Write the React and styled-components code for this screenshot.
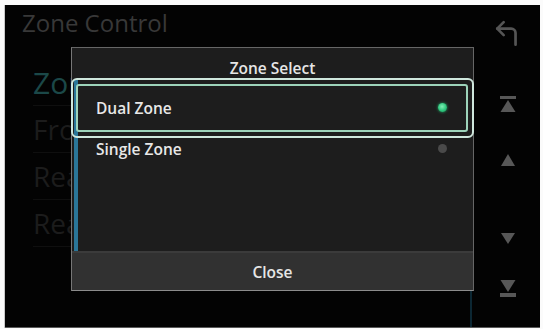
import React from "react";
import styled, { createGlobalStyle } from "styled-components";

const GlobalStyle = createGlobalStyle`
  html, body { margin: 0; padding: 0; background: #fbfbfb; }
  body { font-family: "Open Sans", "Noto Sans", sans-serif; }
  * { box-sizing: border-box; }
`;

const Screen = styled.div`
  position: relative;
  margin: 5px 3px 1px 5px;
  width: 535px;
  height: 323px;
  background: #030303;
  box-shadow: -1px 0 0 #c9c9c9;
  border-bottom: 1px solid #5a5a5a;
  display: grid;
  grid-template-columns: 1fr 62px;
  overflow: hidden;
`;

const Main = styled.div`
  display: flex;
  flex-direction: column;
  padding-left: 17px;
`;

const Title = styled.div`
  font-size: 24px;
  line-height: 30px;
  padding-top: 3px;
  color: #383838;
  font-weight: 500;
`;

const BgList = styled.div`
  margin-top: 21px;
  margin-right: 6px;
  padding-left: 11px;
  border-right: 2px solid #0c2733;
  flex: 1;
  display: flex;
  flex-direction: column;
`;

const BgItem = styled.div`
  width: ${(p) => (p.$active ? "38px" : "40px")};
  height: 47px;
  display: flex;
  align-items: center;
  overflow: hidden;
  font-size: ${(p) => (p.$active ? "30px" : "28px")};
  color: ${(p) => (p.$active ? "#1b4848" : "#1c1c1c")};
  border-bottom: 1px solid #0f0f0f;
  white-space: nowrap;
`;

const Side = styled.div`
  display: flex;
  flex-direction: column;
  align-items: center;
  padding-top: 14px;
  padding-right: 2px;
`;

const IconSlot = styled.div`
  margin-top: ${(p) => p.$mt}px;
  display: flex;
  line-height: 0;
`;

const Dialog = styled.div`
  position: absolute;
  left: 66px;
  top: 42px;
  width: 403px;
  height: 244px;
  border: 1px solid #666;
  border-bottom-color: #8c8c8c;
  border-left-color: #777;
  background: #1d1d1d;
  display: flex;
  flex-direction: column;
`;

const DialogHeader = styled.div`
  height: 31px;
  padding-top: 9px;
  display: flex;
  justify-content: center;
  align-items: center;
  font-size: 15.5px;
  font-weight: 600;
  color: #e6e6e6;
`;

const List = styled.div`
  flex: 1;
  margin-left: 2px;
  border-left: 4px solid #2a7699;
  padding-top: 8px;
  display: flex;
  flex-direction: column;
`;

const Row = styled.div`
  position: relative;
  height: 41px;
  display: flex;
  align-items: center;
  justify-content: space-between;
  padding: 0 26px 0 18px;
  font-size: 15.5px;
  font-weight: 600;
  color: #e8e8e8;

  ${(p) =>
    p.$selected &&
    `
    &::before {
      content: "";
      position: absolute;
      left: -7px;
      right: -1px;
      top: -9px;
      bottom: -10px;
      border: 2px solid #cfe7dd;
      border-radius: 6px;
    }
    &::after {
      content: "";
      position: absolute;
      left: -2px;
      right: 5px;
      top: -3px;
      bottom: -4px;
      border: 2px solid #9dd3ba;
      border-radius: 3px;
    }
  `}
`;

const Dot = styled.span`
  width: 9px;
  height: 9px;
  border-radius: 50%;
  background: ${(p) =>
    p.$on
      ? "radial-gradient(circle at 45% 40%, #7ff0b4 0%, #2dc57c 55%, #1c8f58 100%)"
      : "#4a4a4a"};
  box-shadow: ${(p) => (p.$on ? "0 0 3px #1fae6a" : "none")};
`;

const Footer = styled.div`
  height: 39px;
  border-top: 2px solid #3b3b3b;
  background: #313131;
  display: flex;
  align-items: center;
  justify-content: center;
  font-size: 15.5px;
  font-weight: 600;
  color: #e6e6e6;
`;

const BackIcon = () => (
  <svg width="28" height="28" viewBox="0 0 26 26" fill="none" stroke="#555" strokeWidth="2.5" strokeLinecap="round" strokeLinejoin="round">
    <polyline points="9,2 3,8 9,14" />
    <path d="M3 8 H16 a4 4 0 0 1 4 4 V23" />
  </svg>
);

const ScrollIcon = ({ dir, edge }) => {
  const up = dir === "up";
  return (
    <svg width="18" height="18" viewBox="0 0 18 18" fill="#575757">
      {up ? (
        <>
          {edge && <rect x="1" y="0" width="16" height="3" />}
          <polygon points={edge ? "9,4 1.5,16 16.5,16" : "9,2 2,14 16,14"} />
        </>
      ) : (
        <>
          <polygon points={edge ? "1.5,0 16.5,0 9,12" : "2,4 16,4 9,15"} />
          {edge && <rect x="1" y="13" width="16" height="4" />}
        </>
      )}
    </svg>
  );
};

export default function App() {
  return (
    <>
      <GlobalStyle />
      <Screen>
        <Main>
          <Title>Zone Control</Title>
          <BgList>
            <BgItem $active>Zone Select</BgItem>
            <BgItem>Front Source</BgItem>
            <BgItem>Rear Source</BgItem>
            <BgItem>Rear VOL.</BgItem>
          </BgList>
        </Main>
        <Side>
          <IconSlot $mt={1}>
            <BackIcon />
          </IconSlot>
          <IconSlot $mt={48}>
            <ScrollIcon dir="up" edge />
          </IconSlot>
          <IconSlot $mt={38}>
            <ScrollIcon dir="up" />
          </IconSlot>
          <IconSlot $mt={59}>
            <ScrollIcon dir="down" />
          </IconSlot>
          <IconSlot $mt={33}>
            <ScrollIcon dir="down" edge />
          </IconSlot>
        </Side>
        <Dialog>
          <DialogHeader>Zone Select</DialogHeader>
          <List>
            <Row $selected>
              <span>Dual Zone</span>
              <Dot $on />
            </Row>
            <Row>
              <span>Single Zone</span>
              <Dot />
            </Row>
          </List>
          <Footer>Close</Footer>
        </Dialog>
      </Screen>
    </>
  );
}
